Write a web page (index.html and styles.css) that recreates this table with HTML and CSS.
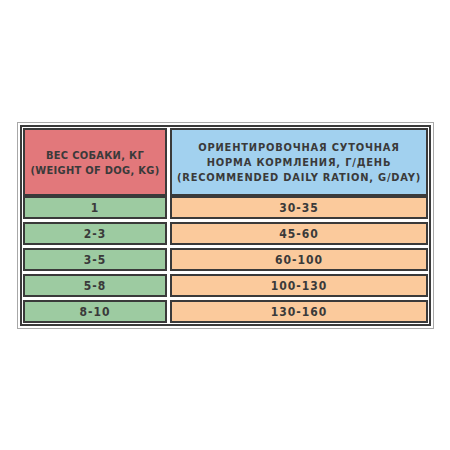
FILE: index.html
```html
<!DOCTYPE html>
<html>
<head>
<meta charset="utf-8">
<link rel="stylesheet" href="styles.css">
</head>
<body>
<div class="frame">
  <div class="inner">
    <div class="row head">
      <div class="cell red">ВЕС СОБАКИ, КГ<br>(WEIGHT OF DOG, KG)</div>
      <div class="cell blue">ОРИЕНТИРОВОЧНАЯ СУТОЧНАЯ<br>НОРМА КОРМЛЕНИЯ, Г/ДЕНЬ<br>(RECOMMENDED DAILY RATION, G/DAY)</div>
    </div>
    <div class="row"><div class="cell green">1</div><div class="cell orange">30-35</div></div>
    <div class="row"><div class="cell green">2-3</div><div class="cell orange">45-60</div></div>
    <div class="row"><div class="cell green">3-5</div><div class="cell orange">60-100</div></div>
    <div class="row"><div class="cell green">5-8</div><div class="cell orange">100-130</div></div>
    <div class="row"><div class="cell green">8-10</div><div class="cell orange">130-160</div></div>
  </div>
</div>
</body>
</html>
```
FILE: styles.css
```css
html, body { margin: 0; padding: 0; background: #fff; }
body { width: 450px; height: 450px; overflow: hidden; }
.frame {
  margin: 122px 0 0 17px;
  width: 411px;
  border: 1px solid #a8a8a8;
  padding: 2px;
}
.inner {
  border: 2px solid #3a3a3a;
  padding: 1px;
  display: flex;
  flex-direction: column;
  gap: 3px;
}
.row {
  display: grid;
  grid-template-columns: 144px 1fr;
  column-gap: 3px;
}
.row.head { margin-bottom: -3px; }
.cell {
  border: 2px solid #3a3a3a;
  height: 19px;
  display: flex;
  align-items: center;
  justify-content: center;
  text-align: center;
  color: #3a3a3a;
  font-family: "DejaVu Sans Condensed", "DejaVu Sans", sans-serif;
  font-weight: bold;
  font-size: 12px;
  letter-spacing: 1px;
}
.head .cell {
  height: 62px;
  padding-top: 2px;
  font-size: 11px;
  line-height: 15px;
  letter-spacing: 0.3px;
}
.head .cell.blue {
  height: 63px;
  padding-top: 1px;
  letter-spacing: 0.8px;
}
.red { background: #e2787b; }
.blue { background: #a2d1ef; }
.green { background: #9dcba1; }
.orange { background: #fbca9c; }
```
